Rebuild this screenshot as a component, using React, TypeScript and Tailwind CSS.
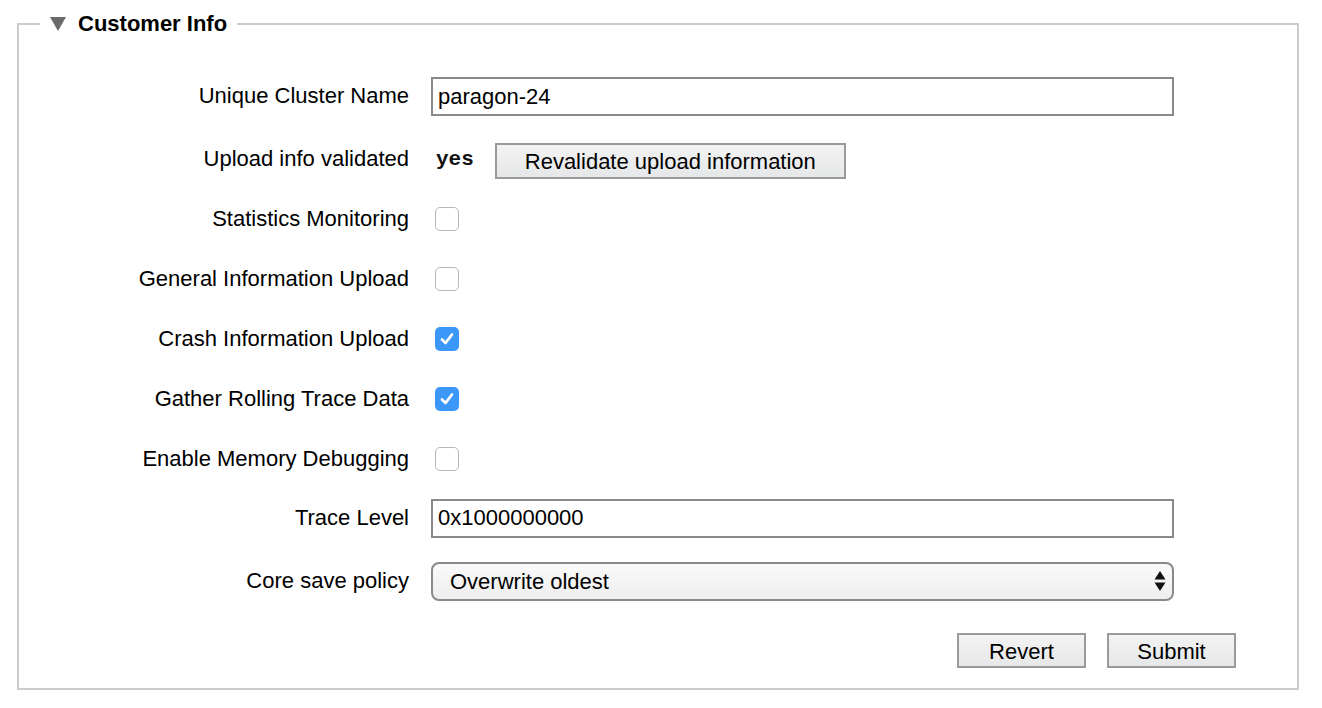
import { useState } from 'react';

const labelFont = "[font-family:'Liberation_Sans',Arial,sans-serif]";

function Row({ label, height, labelClass = '', children }: { label: string; height: string; labelClass?: string; children: React.ReactNode }) {
  return (
    <div className={`flex items-center ${height}`}>
      <div className={`w-[390px] shrink-0 text-right text-[22px] text-black ${labelClass}`}>{label}</div>
      <div className="ml-[22px] flex items-center">{children}</div>
    </div>
  );
}

function Check({ checked, onToggle }: { checked: boolean; onToggle: () => void }) {
  return (
    <button
      type="button"
      onClick={onToggle}
      className={
        checked
          ? 'ml-[4px] flex h-[24px] w-[24px] items-center justify-center rounded-[5px] bg-[#3b97f8]'
          : 'ml-[4px] h-[24px] w-[24px] rounded-[5px] border-[1.5px] border-[#b8b8b8] bg-white'
      }
    >
      {checked && (
        <svg width="16" height="16" viewBox="0 0 16 16">
          <path d="M3 8.5 L6.5 12 L13 3.5" fill="none" stroke="white" strokeWidth="2.8" strokeLinecap="round" strokeLinejoin="round" />
        </svg>
      )}
    </button>
  );
}

export default function App() {
  const [name, setName] = useState('paragon-24');
  const [trace, setTrace] = useState('0x1000000000');
  const [policy, setPolicy] = useState('Overwrite oldest');
  const [flags, setFlags] = useState({
    stats: false,
    general: false,
    crash: true,
    rolling: true,
    memory: false,
  });

  const toggle = (key: keyof typeof flags) => setFlags({ ...flags, [key]: !flags[key] });

  return (
    <div className={`min-h-screen bg-white pt-[12px] ${labelFont}`}>
      <fieldset className="ml-[17px] w-[1282px] border-2 border-[#cccccc] pt-[24px] pb-[20px]">
        <legend className="ml-[21px] flex h-[24px] items-center px-[10px]">
          <svg width="16" height="14" viewBox="0 0 16 14" className="mr-[12px]">
            <polygon points="0,0 16,0 8,14" fill="#6b6b6b" />
          </svg>
          <span className="text-[22px] font-bold leading-[24px] text-black">Customer Info</span>
        </legend>

        <Row label="Unique Cluster Name" height="h-[73px]" labelClass="-mt-[2px]">
          <input
            value={name}
            onChange={(e) => setName(e.target.value)}
            className="h-[39px] w-[743px] border-2 border-[#8a8a8a] bg-white px-[5px] text-[22px] text-black outline-none"
          />
        </Row>

        <Row label="Upload info validated" height="h-[56px]" labelClass="-mt-[6px]">
          <span className="ml-[5px] -mt-[2px] font-mono text-[21px] font-bold text-[#111]">yes</span>
          <button
            type="button"
            className="ml-[21px] h-[36px] w-[351px] border-2 border-[#9a9a9a] bg-gradient-to-b from-[#f3f3f3] to-[#e6e7e8] text-[22px] text-black"
          >
            Revalidate upload information
          </button>
        </Row>

        <Row label="Statistics Monitoring" height="h-[60px]" labelClass="-mt-[2px]">
          <Check checked={flags.stats} onToggle={() => toggle('stats')} />
        </Row>
        <Row label="General Information Upload" height="h-[60px]" labelClass="-mt-[2px]">
          <Check checked={flags.general} onToggle={() => toggle('general')} />
        </Row>
        <Row label="Crash Information Upload" height="h-[60px]" labelClass="-mt-[2px]">
          <Check checked={flags.crash} onToggle={() => toggle('crash')} />
        </Row>
        <Row label="Gather Rolling Trace Data" height="h-[60px]" labelClass="-mt-[2px]">
          <Check checked={flags.rolling} onToggle={() => toggle('rolling')} />
        </Row>
        <Row label="Enable Memory Debugging" height="h-[60px]" labelClass="-mt-[2px]">
          <Check checked={flags.memory} onToggle={() => toggle('memory')} />
        </Row>

        <Row label="Trace Level" height="h-[58px]" labelClass="-mt-[2px]">
          <input
            value={trace}
            onChange={(e) => setTrace(e.target.value)}
            className="h-[39px] w-[743px] border-2 border-[#8a8a8a] bg-white px-[5px] text-[22px] text-black outline-none"
          />
        </Row>

        <Row label="Core save policy" height="h-[68px]" labelClass="-mt-[2px]">
          <div className="relative">
            <select
              value={policy}
              onChange={(e) => setPolicy(e.target.value)}
              className="h-[39px] w-[743px] appearance-none rounded-[8px] border-2 border-[#8a8a8a] bg-gradient-to-b from-[#fafafa] to-[#eeeeee] pl-[17px] text-[22px] text-black outline-none"
            >
              <option>Overwrite oldest</option>
              <option>Keep oldest</option>
              <option>Disabled</option>
            </select>
            <svg width="12" height="22" viewBox="0 0 12 22" className="pointer-events-none absolute right-[8px] top-[8px]">
              <polygon points="6,1 11.5,9.5 0.5,9.5" fill="#111" />
              <polygon points="0.5,12.5 11.5,12.5 6,21" fill="#111" />
            </svg>
          </div>
        </Row>

        <div className="mt-[18px] flex justify-end gap-[21px] pr-[61px]">
          <button
            type="button"
            className="h-[35px] w-[129px] border-2 border-[#9a9a9a] bg-gradient-to-b from-[#f3f3f3] to-[#e6e7e8] text-[22px] text-black"
          >
            Revert
          </button>
          <button
            type="button"
            className="h-[35px] w-[129px] border-2 border-[#9a9a9a] bg-gradient-to-b from-[#f3f3f3] to-[#e6e7e8] text-[22px] text-black"
          >
            Submit
          </button>
        </div>
      </fieldset>
    </div>
  );
}
